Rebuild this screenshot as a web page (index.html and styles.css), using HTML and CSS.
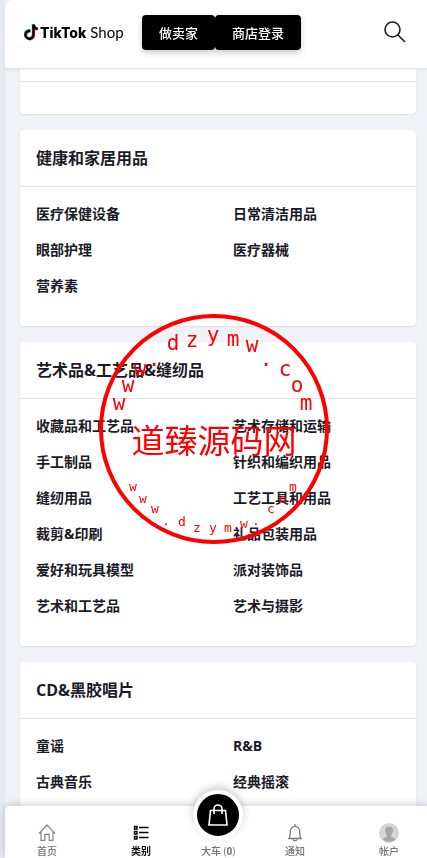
FILE: index.html
```html
<!DOCTYPE html>
<html lang="zh-CN">
<head>
    <meta charset="UTF-8">
    <meta name="viewport" content="width=device-width, initial-scale=1.0">
    <title>TikTok Shop</title>
    <link rel="stylesheet" href="styles.css">
</head>
<body>

    <header class="top-bar">
        <a class="logo" href="#">
            <svg width="15" height="18" viewBox="0 0 15 18" fill="none" stroke-width="2.400">
                <path stroke="#25f4ee" d="M5.500 7.300a4 4 0 1 0 3.300 4V1c.3 2.600 1.700 4 4.200 4.300"/>
                <path stroke="#fe2c55" d="M6.700 8.300a4 4 0 1 0 3.300 4V2c.3 2.600 1.700 4 4.200 4.300"/>
                <path stroke="#000" d="M6.100 7.800a4 4 0 1 0 3.300 4V1.500c.3 2.600 1.700 4 4.200 4.300"/>
            </svg>
            <b>TikTok</b>
            <span>Shop</span>
        </a>
        <div class="top-buttons">
            <button type="button">做卖家</button><button type="button">商店登录</button>
        </div>
        <a class="search" href="#" aria-label="搜索">
            <svg width="22" height="22" viewBox="0 0 22 22" fill="none" stroke="#1b1b28" stroke-width="1.600">
                <circle cx="8.500" cy="8.500" r="7.500"/>
                <path d="M14 14l7 7"/>
            </svg>
        </a>
    </header>

    <main class="categories">
        <section class="card">
            <div class="card-head"></div>
            <div class="card-body"></div>
        </section>

        <section class="card">
            <h2 class="card-head">健康和家居用品</h2>
            <div class="card-body">
                <ul>
                    <li><a href="#">医疗保健设备</a></li>
                    <li><a href="#">日常清洁用品</a></li>
                    <li><a href="#">眼部护理</a></li>
                    <li><a href="#">医疗器械</a></li>
                    <li><a href="#">营养素</a></li>
                </ul>
            </div>
        </section>

        <section class="card">
            <h2 class="card-head">艺术品&amp;工艺品&amp;缝纫品</h2>
            <div class="card-body">
                <ul>
                    <li><a href="#">收藏品和工艺品</a></li>
                    <li><a href="#">艺术存储和运输</a></li>
                    <li><a href="#">手工制品</a></li>
                    <li><a href="#">针织和编织用品</a></li>
                    <li><a href="#">缝纫用品</a></li>
                    <li><a href="#">工艺工具和用品</a></li>
                    <li><a href="#">裁剪&amp;印刷</a></li>
                    <li><a href="#">礼品包装用品</a></li>
                    <li><a href="#">爱好和玩具模型</a></li>
                    <li><a href="#">派对装饰品</a></li>
                    <li><a href="#">艺术和工艺品</a></li>
                    <li><a href="#">艺术与摄影</a></li>
                </ul>
            </div>
        </section>

        <section class="card">
            <h2 class="card-head">CD&amp;黑胶唱片</h2>
            <div class="card-body">
                <ul>
                    <li><a href="#">童谣</a></li>
                    <li><a href="#">R&amp;B</a></li>
                    <li><a href="#">古典音乐</a></li>
                    <li><a href="#">经典摇滚</a></li>
                </ul>
            </div>
        </section>
    </main>

    <nav class="bottom-nav">
        <a href="#">
            <svg width="20" height="20" viewBox="0 0 20 20" fill="none" stroke="#85858c" stroke-width="1.200">
                <path d="M2 10.500L10 2l8 8.500M4 9v8.400h3.800v-6h4.400v6H16V9"/>
            </svg>
            <span>首页</span>
        </a>
        <a class="active" href="#">
            <svg width="20" height="20" viewBox="0 0 20 20" fill="none" stroke="#000" stroke-width="1.400">
                <path d="M3.500 3.500h2.500v2.500H3.500zM3.500 8.500h2.500v2.500H3.500zM3.500 13.500h2.500v2.500H3.500zM8 4.500h9.500M8 9.500h9.500M8 14.500h9.500"/>
            </svg>
            <span>类别</span>
        </a>
        <a class="cart" href="#">
            <i>
                <svg width="22" height="24" viewBox="0 0 22 24" fill="none" stroke="#fff" stroke-width="1.600">
                    <path d="M3.500 7.500h15L20 22H2zM7 11V6a4 4 0 0 1 8 0v5"/>
                </svg>
            </i>
            <span>大车 (<b>0</b>)</span>
        </a>
        <a href="#">
            <svg width="20" height="20" viewBox="0 0 20 20" fill="none" stroke="#77777f" stroke-width="1.300">
                <path d="M4 15.500c1.300-1.500 1.300-2.500 1.300-7a4.700 5.200 0 0 1 9.400 0c0 4.500 0 5.500 1.300 7zM10 1v2.500M8.300 16.500a1.700 1.400 0 0 0 3.400 0"/>
            </svg>
            <span>通知</span>
        </a>
        <a href="#">
            <svg width="20" height="20" viewBox="0 0 20 20">
                <circle cx="10" cy="10" r="10" fill="#d5d5d5"/>
                <path fill="#a6a6a6" d="M10 3.500c3 0 4.300 2 4 4.500-.2 2-1.200 3.300-1.800 4v1.800c.3.900 3.300 1 4.300 2.500a9.500 9.500 0 0 1-13 0c1-1.500 4-1.600 4.300-2.500V12C7.200 11.300 6.200 10 6 8c-.3-2.500 1-4.500 4-4.500z"/>
            </svg>
            <span>帐户</span>
        </a>
    </nav>

    <!-- round stamp, floats over the page -->
    <svg class="stamp" width="232" height="230" viewBox="98 314 232 230">
        <circle cx="214" cy="429" r="113" fill="none" stroke="#f00" stroke-width="4"/>
        <g class="stamp-big">
            <text x="119" y="410">w</text>
            <text x="128" y="392">w</text>
            <text x="140" y="376">w</text>
            <text x="154" y="366">.</text>
            <text x="173" y="350">d</text>
            <text x="192" y="347">z</text>
            <text x="213" y="342">y</text>
            <text x="233" y="346">m</text>
            <text x="252" y="352">w</text>
            <text x="266" y="366">.</text>
            <text x="285" y="376">c</text>
            <text x="297" y="392">o</text>
            <text x="306" y="410">m</text>
        </g>
        <text class="stamp-name" x="214" y="453">道臻源码网</text>
        <g class="stamp-small">
            <text x="133" y="491">w</text>
            <text x="143" y="503">w</text>
            <text x="155" y="513">w</text>
            <text x="166" y="525">.</text>
            <text x="182" y="526">d</text>
            <text x="197" y="532">z</text>
            <text x="213" y="532">y</text>
            <text x="228" y="532">m</text>
            <text x="244" y="528">w</text>
            <text x="256" y="525">.</text>
            <text x="271" y="513">c</text>
            <text x="283" y="503">o</text>
            <text x="293" y="491">m</text>
        </g>
    </svg>

</body>
</html>
```
FILE: styles.css
```css
* {
    box-sizing: border-box;
}

body {
    margin: 0;
    min-height: 100vh;
    border-left: 5px solid #e6eaf3;
    background-color: #f1f2f8;
    font-family: "Open Sans", "Noto Sans CJK SC", sans-serif;
    color: #1b1b28;
}

a {
    color: inherit;
    text-decoration: none;
}

svg {
    flex-shrink: 0;
}

/* top bar */
.top-bar {
    position: fixed;
    z-index: 10;
    top: 0;
    left: 5px;
    right: 0;
    height: 69px;
    padding: 0 21px 4px 19px;
    display: flex;
    align-items: center;
    background-color: #fff;
    border-bottom: 1px solid #e2e5ec;
    border-top-left-radius: 8px;
    box-shadow: 0 1px 3px rgba(0, 0, 0, 0.06);
}

.logo {
    width: 118px;
    display: flex;
    align-items: center;
    color: #000;
    font-family: Lato, sans-serif;
    font-size: 15px;
}

.logo b {
    font-family: Inter, sans-serif;
    font-size: 14px;
    font-weight: 800;
    margin: 0 4px 0 1px;
}

.top-buttons {
    display: flex;
}

.top-buttons button {
    height: 35px;
    padding: 0 17px;
    border: 0;
    border-radius: 4px;
    background-color: #000;
    color: #fff;
    font-family: inherit;
    font-size: 13px;
    font-weight: 500;
    box-shadow: 0 3px 6px rgba(0, 0, 0, 0.2);
    cursor: pointer;
}

.search {
    margin-left: auto;
    display: flex;
}

/* category cards */
.categories {
    padding: 25px 11px 20px 15px;
    display: flex;
    flex-direction: column;
    gap: 16px;
}

.card {
    background-color: #fff;
    border-radius: 4px;
    box-shadow: 0 1px 2px rgba(43, 52, 69, 0.1);
}

.card-head {
    height: 57px;
    margin: 0;
    padding: 0 16px;
    border-bottom: 1px solid #e2e2ea;
    font-size: 16px;
    font-weight: 700;
    line-height: 56px;
}

.card-body {
    padding: 16px;
}

.card-body ul {
    list-style: none;
    margin: 0 0 14px;
    padding: 0;
    display: grid;
    grid-template-columns: 1fr 1fr;
    gap: 15px 30px;
}

.card-body li {
    height: 21px;
    font-size: 14px;
    font-weight: 700;
    line-height: 21px;
    white-space: nowrap;
}

/* bottom nav */
.bottom-nav {
    position: fixed;
    z-index: 10;
    left: 5px;
    right: 0;
    bottom: 0;
    height: 52px;
    padding-top: 17px;
    display: flex;
    background-color: #fff;
    border-top-left-radius: 5px;
    box-shadow: 0 -1px 8px rgba(0, 0, 0, 0.2);
    color: #73737b;
    font-size: 10px;
    font-weight: 500;
    line-height: 16px;
}

.bottom-nav a {
    flex: 1;
    display: flex;
    flex-direction: column;
    align-items: center;
}

.bottom-nav a:first-child {
    margin-left: -5px;
}

.bottom-nav a:last-child {
    margin-right: -9px;
}

.bottom-nav .active {
    color: #111;
    font-weight: 700;
}

.bottom-nav .cart {
    flex: 0 0 60px;
}

.cart i {
    flex-shrink: 0;
    width: 50px;
    height: 50px;
    margin: -33px 0 3px;
    border: 4px solid #fff;
    border-radius: 50%;
    display: flex;
    align-items: center;
    justify-content: center;
    background-color: #000;
    box-shadow: 0 -3px 8px rgba(0, 0, 0, 0.2);
}

/* stamp */
.stamp {
    position: fixed;
    z-index: 20;
    top: 50%;
    left: 50%;
    margin: -115px 0 0 -116px;
    fill: #f00;
    text-anchor: middle;
    pointer-events: none;
}

.stamp-big {
    font-family: "DejaVu Sans Mono", monospace;
    font-size: 21px;
}

.stamp-small {
    font-family: "DejaVu Sans Mono", monospace;
    font-size: 13px;
}

.stamp-name {
    font-family: "Noto Sans CJK SC", sans-serif;
    font-size: 33px;
}
```
